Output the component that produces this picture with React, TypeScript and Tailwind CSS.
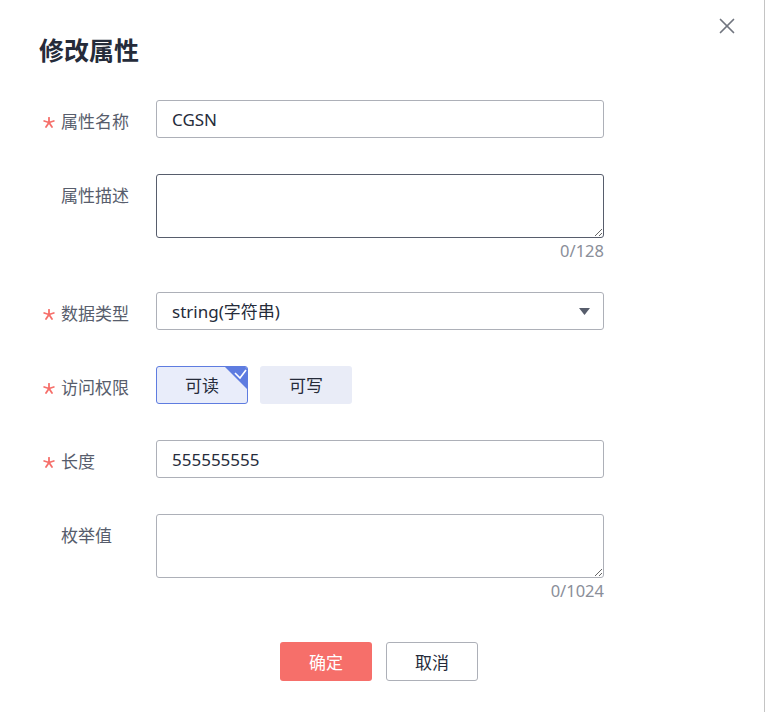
import { FC, ReactNode } from "react";

const font = "font-['Noto_Sans','Noto_Sans_CJK_SC',sans-serif]";

const Star: FC = () => (
  <svg width="12" height="11" viewBox="0 0 12 11" className="mt-[17px]">
    <g stroke="#f66f6a" strokeWidth="1.8" strokeLinecap="round">
      <line x1="6" y1="5.5" x2="6" y2="0.8" />
      <line x1="6" y1="5.5" x2="1.2" y2="4" />
      <line x1="6" y1="5.5" x2="10.8" y2="4" />
      <line x1="6" y1="5.5" x2="3" y2="10" />
      <line x1="6" y1="5.5" x2="9" y2="10" />
    </g>
  </svg>
);

interface RowProps {
  label: string;
  required?: boolean;
  className?: string;
  children: ReactNode;
}

const Row: FC<RowProps> = ({ label, required, className, children }) => (
  <div className={`flex items-start ${className ?? ""}`}>
    <div className="flex h-[38px] w-[113px] shrink-0 items-start">
      <div className="flex w-[18px] justify-start">{required && <Star />}</div>
      <span className="block h-[38px] text-[17px] leading-[44px] text-[#575d6c]">{label}</span>
    </div>
    <div className="w-[448px]">{children}</div>
  </div>
);

const TextArea: FC<{ max: number; focused?: boolean }> = ({ max, focused }) => (
  <div>
    <textarea
      className={`block h-[64px] w-full resize-y rounded-[3px] border bg-white px-[15px] py-[6px] text-[17px] outline-none ${
        focused ? "border-[#575d6c]" : "border-[#adb0b8]"
      }`}
    />
    <div className="mt-[3px] text-right text-[16.5px] leading-5 text-[#8a8e99]">0/{max}</div>
  </div>
);

const App: FC = () => {
  return (
    <div className={`relative h-[712px] w-[765px] border-r border-[#c4c4c4] bg-white ${font}`}>
      <button className="absolute right-[29px] top-[18px] text-[#71757f]">
        <svg width="16" height="16" viewBox="0 0 16 16">
          <g stroke="currentColor" strokeWidth="1.7" strokeLinecap="round">
            <line x1="1.5" y1="1.5" x2="14.5" y2="14.5" />
            <line x1="14.5" y1="1.5" x2="1.5" y2="14.5" />
          </g>
        </svg>
      </button>

      <h1 className="ml-[39px] pt-[33px] text-[25px] font-bold leading-[34px] text-[#252b3a]">
        修改属性
      </h1>

      <div className="flex flex-col pl-[43px]">
        <Row label="属性名称" required className="mt-[33px]">
          <div className="flex h-[38px] items-center rounded-[3px] border border-[#adb0b8] px-[15px] pt-[2px] text-[17px] text-[#252b3a]">
            CGSN
          </div>
        </Row>

        <Row label="属性描述" className="mt-[36px]">
          <TextArea max={128} focused />
        </Row>

        <Row label="数据类型" required className="mt-[31px]">
          <div className="flex h-[38px] items-center justify-between rounded-[3px] border border-[#adb0b8] pl-[15px] pr-[13px] text-[17px] text-[#252b3a]">
            <span className="pt-[2px]">string(字符串)</span>
            <svg width="11" height="7" viewBox="0 0 11 7">
              <polygon points="0,0 11,0 5.5,7" fill="#575d6c" />
            </svg>
          </div>
        </Row>

        <Row label="访问权限" required className="mt-[36px]">
          <div className="flex gap-[12px]">
            <div className="relative flex h-[38px] w-[92px] items-center justify-center overflow-hidden rounded-[3px] border border-[#5e7ce0] bg-[#e9edfa] pt-[2px] text-[17px] text-[#252b3a]">
              可读
              <svg width="22" height="22" viewBox="0 0 22 22" className="absolute right-0 top-0">
                <polygon points="0,0 22,0 22,22" fill="#5e7ce0" />
                <polyline
                  points="10,6 15,11 21,3"
                  fill="none"
                  stroke="#fff"
                  strokeWidth="1.6"
                />
              </svg>
            </div>
            <div className="flex h-[38px] w-[92px] items-center justify-center rounded-[3px] bg-[#e9ecf7] pt-[2px] text-[17px] text-[#252b3a]">
              可写
            </div>
          </div>
        </Row>

        <Row label="长度" required className="mt-[36px]">
          <div className="flex h-[38px] items-center rounded-[3px] border border-[#adb0b8] px-[15px] pt-[2px] text-[17px] text-[#252b3a]">
            555555555
          </div>
        </Row>

        <Row label="枚举值" className="mt-[36px]">
          <TextArea max={1024} />
        </Row>
      </div>

      <div className="mt-[41px] flex justify-center gap-[14px] pr-[6px]">
        <button className="h-[39px] w-[92px] rounded-[3px] bg-[#f66f6a] pt-[2px] text-[17px] text-white">
          确定
        </button>
        <button className="h-[39px] w-[92px] rounded-[3px] border border-[#adb0b8] bg-white pt-[2px] text-[17px] text-[#252b3a]">
          取消
        </button>
      </div>
    </div>
  );
};

export default App;
